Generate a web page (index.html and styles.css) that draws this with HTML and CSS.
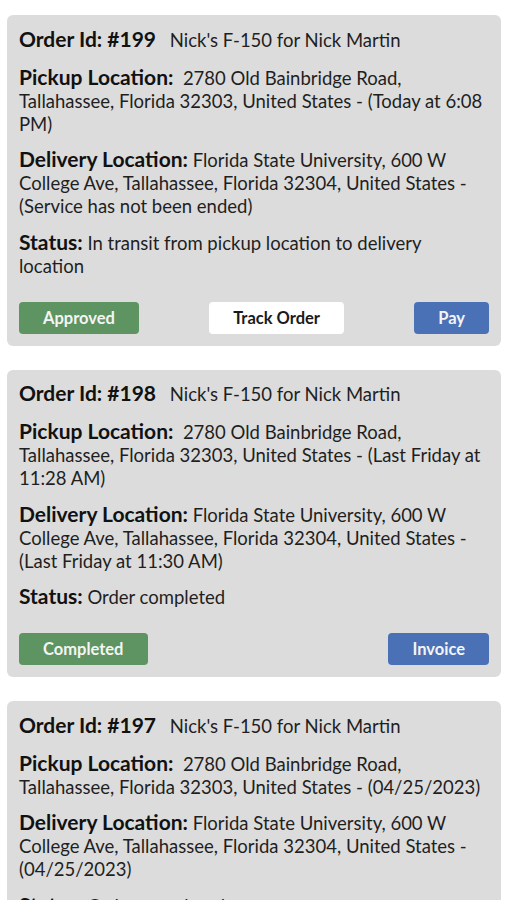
FILE: index.html
```html
<!DOCTYPE html>
<html lang="en">
<head>
    <meta charset="UTF-8">
    <meta name="viewport" content="width=device-width, initial-scale=1.0">
    <title>My Orders</title>
    <link rel="stylesheet" href="styles.css">
</head>
<body>

    <div class="orders">
        <div class="order-card">
            <p class="order-title"><b>Order Id: #199</b> <span class="vehicle">Nick's F-150 for Nick Martin</span></p>
            <p><b>Pickup Location:</b>&nbsp; 2780 Old Bainbridge Road, Tallahassee, Florida 32303, United States - (Today at 6:08 PM)</p>
            <p><b>Delivery Location:</b> Florida State University, 600 W College Ave, Tallahassee, Florida 32304, United States - (Service has not been ended)</p>
            <p><b>Status:</b> In transit from pickup location to delivery location</p>
            <div class="actions">
                <button class="btn btn-green">Approved</button>
                <button class="btn btn-white">Track Order</button>
                <button class="btn btn-blue">Pay</button>
            </div>
        </div>

        <div class="order-card">
            <p class="order-title"><b>Order Id: #198</b> <span class="vehicle">Nick's F-150 for Nick Martin</span></p>
            <p><b>Pickup Location:</b>&nbsp; 2780 Old Bainbridge Road, Tallahassee, Florida 32303, United States - (Last Friday at 11:28 AM)</p>
            <p><b>Delivery Location:</b> Florida State University, 600 W College Ave, Tallahassee, Florida 32304, United States - (Last Friday at 11:30 AM)</p>
            <p><b>Status:</b> Order completed</p>
            <div class="actions">
                <button class="btn btn-green">Completed</button>
                <button class="btn btn-blue">Invoice</button>
            </div>
        </div>

        <div class="order-card">
            <p class="order-title"><b>Order Id: #197</b> <span class="vehicle">Nick's F-150 for Nick Martin</span></p>
            <p><b>Pickup Location:</b>&nbsp; 2780 Old Bainbridge Road, Tallahassee, Florida 32303, United States - (04/25/2023)</p>
            <p><b>Delivery Location:</b> Florida State University, 600 W College Ave, Tallahassee, Florida 32304, United States - (04/25/2023)</p>
            <p><b>Status:</b> Order completed</p>
            <div class="actions">
                <button class="btn btn-green">Completed</button>
                <button class="btn btn-blue">Invoice</button>
            </div>
        </div>
    </div>

</body>
</html>
```

FILE: styles.css
```css
* {
    margin: 0;
    padding: 0;
    box-sizing: border-box;
}

body {
    background: #ffffff;
    font-family: Lato, "Noto Sans", sans-serif;
    color: #1f1f1f;
}

.orders {
    display: flex;
    flex-direction: column;
    gap: 24px;
    padding: 15px 6px 24px 7px;
}

.order-card {
    background: #dcdcdc;
    border-radius: 6px;
    padding: 12.5px 12px 12px 12px;
}

.order-card p {
    font-size: 18.5px;
    line-height: 23px;
    margin-bottom: 13.5px;
}

.order-card p b {
    font-size: 21px;
    line-height: 18px;
    font-weight: 700;
    color: #111;
}

.order-card .order-title {
    line-height: 25px;
    margin-bottom: 14px;
}

.vehicle {
    margin-left: 9px;
}

.actions {
    display: flex;
    justify-content: space-between;
    margin-top: 24px;
}

.btn {
    height: 32px;
    font-family: Lato, "Noto Sans", sans-serif;
    font-size: 16.5px;
    font-weight: 700;
    line-height: 20px;
    padding: 6px 24px;
    border: none;
    border-radius: 4px;
    cursor: pointer;
}

.btn-green {
    background: #5e9461;
    color: #f4f4f4;
}

.btn-white {
    background: #ffffff;
    color: #1a1a1a;
}

.btn-blue {
    background: #4a71b6;
    color: #f4f4f4;
}
```
